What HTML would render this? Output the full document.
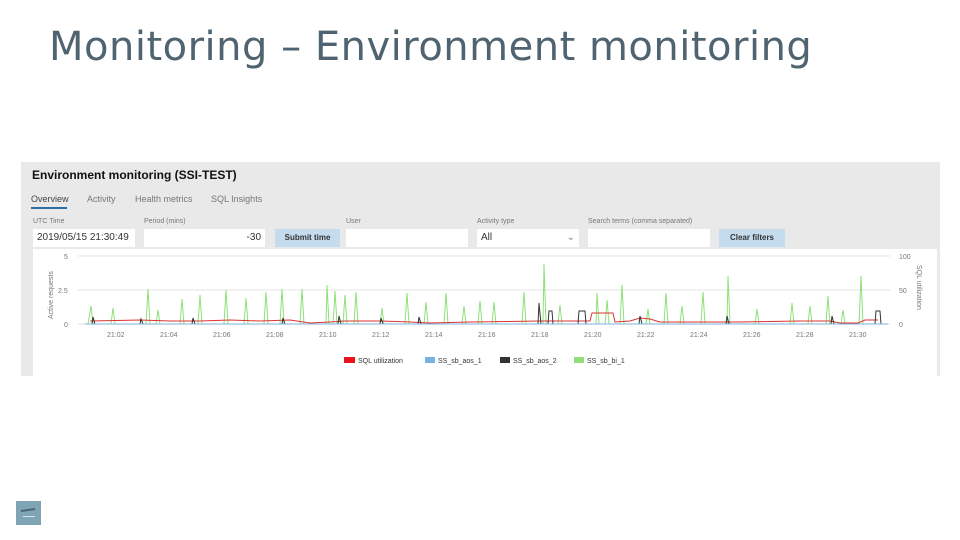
<!DOCTYPE html>
<html><head><meta charset="utf-8"><style>
body{margin:0;width:960px;height:540px;background:#fff;position:relative;overflow:hidden;font-family:"Liberation Sans",sans-serif}
.t{position:absolute;left:49px;top:24px;font-size:40px;color:#4f6470;font-family:"DejaVu Sans",sans-serif;letter-spacing:0.5px}
.p{position:absolute;left:21px;top:162px;width:919px;height:214px;background:#e9e9e9}
.a{position:absolute;font-size:8px;color:#777}
.in{position:absolute;background:#fff;height:18px;top:229px;font-size:10px;color:#333;line-height:18px;box-sizing:border-box;padding:0 4px}
.btn{position:absolute;top:229px;height:18px;background:#c5dcef;font-size:8px;font-weight:bold;color:#333;text-align:center;line-height:18px}
</style></head><body>
<div class="t">Monitoring – Environment monitoring</div>
<div class="p"></div>
<div style="position:absolute;left:32px;top:168px;font-size:12px;font-weight:bold;color:#111">Environment monitoring (SSI-TEST)</div>
<div class="a" style="left:31px;top:194px;font-size:9px;color:#444">Overview</div>
<div style="position:absolute;left:31px;top:207px;width:36px;height:2px;background:#2c6ea8"></div>
<div class="a" style="left:87px;top:194px;font-size:9px">Activity</div>
<div class="a" style="left:135px;top:194px;font-size:9px">Health metrics</div>
<div class="a" style="left:211px;top:194px;font-size:9px">SQL Insights</div>
<div class="a" style="left:33px;top:218px;font-size:7px">UTC Time</div>
<div class="a" style="left:144px;top:218px;font-size:7px">Period (mins)</div>
<div class="a" style="left:346px;top:218px;font-size:7px">User</div>
<div class="a" style="left:477px;top:218px;font-size:7px">Activity type</div>
<div class="a" style="left:588px;top:218px;font-size:7px">Search terms (comma separated)</div>
<div class="in" style="left:33px;width:102px">2019/05/15 21:30:49 ▦</div>
<div class="in" style="left:144px;width:121px;text-align:right">-30</div>
<div class="btn" style="left:275px;width:65px">Submit time</div>
<div class="in" style="left:346px;width:122px"></div>
<div class="in" style="left:477px;width:102px">All<span style="float:right;color:#888">⌄</span></div>
<div class="in" style="left:588px;width:122px"></div>
<div class="btn" style="left:719px;width:66px">Clear filters</div>
<svg style="position:absolute;left:33px;top:249px" width="904" height="127" viewBox="33 249 904 127">
<rect x="33" y="249" width="904" height="127" fill="#fff"/>
<g stroke="#e4e4e4" stroke-width="1"><line x1="78" y1="256" x2="890" y2="256"/><line x1="78" y1="290" x2="890" y2="290"/><line x1="78" y1="324" x2="890" y2="324"/></g>
<g font-size="7" fill="#777" font-family="Liberation Sans"><text x="64" y="259">5</text><text x="58" y="293">2.5</text><text x="64" y="327">0</text>
<text x="899" y="259">100</text><text x="899" y="293">50</text><text x="899" y="327">0</text>
<text transform="translate(53,319) rotate(-90)">Active requests</text>
<text transform="translate(917,265) rotate(90)">SQL utilization</text>
<text x="107" y="337">21:02</text><text x="160" y="337">21:04</text><text x="213" y="337">21:06</text><text x="266" y="337">21:08</text><text x="319" y="337">21:10</text><text x="372" y="337">21:12</text><text x="425" y="337">21:14</text><text x="478" y="337">21:16</text><text x="531" y="337">21:18</text><text x="584" y="337">21:20</text><text x="637" y="337">21:22</text><text x="690" y="337">21:24</text><text x="743" y="337">21:26</text><text x="796" y="337">21:28</text><text x="849" y="337">21:30</text></g>
<g stroke="#8fe07a" stroke-width="1" fill="none">
<path d="M88 324L91 306L93 324M111 324L113 308L115 324M146 324L148 289L150 324M156 324L158 310L160 324M180 324L182 299L184 324M198 324L200 295L202 324M224 324L226 290L228 324M244 324L246 298L248 324M264 324L266 292L268 324M280 324L282 289L284 324M300 324L302 289L304 324M326 324L327 285L329 324M333 324L335 291L337 324M343 324L345 295L347 324M354 324L356 292L358 324M380 324L382 308L384 324M405 324L407 293L409 324M424 324L426 302L428 324M444 324L446 293L448 324M462 324L464 306L466 324M478 324L480 301L482 324M492 324L494 302L496 324M522 324L524 292L526 324M543 324L544 264L546 324M558 324L560 305L562 324M596 324L597 293L599 324M605 324L607 300L609 324M620 324L622 285L624 324M646 324L648 309L650 324M664 324L666 293L668 324M680 324L682 306L684 324M701 324L703 292L705 324M727 324L728 276L730 324M755 324L757 309L759 324M790 324L792 303L794 324M808 324L810 306L812 324M826 324L828 296L830 324M841 324L843 310L845 324M859 324L861 276L863 324"/></g>
<path d="M90 321L140 320L170 321L200 321L230 320L260 321L290 320L310 323L330 322L345 321L380 321L410 322L430 323L470 322L540 321L590 321L592 313L613 313L615 322L630 321L640 318L650 319L660 322L700 322L740 322L800 321L830 321L840 323L858 323L865 320L878 320" stroke="#d33" stroke-width="1" fill="none"/>
<path d="M92 324L93 317L95 324M140 324L141 319L143 324M192 324L193 318L195 324M282 324L283 318L285 324M338 324L339 316L341 324M380 324L381 318L383 324M418 324L419 317L421 324M538 324L539 303L541 324M548 324L549 311L552 311L553 324M578 324L579 311L585 311L586 324M639 324L640 316L642 324M726 324L727 316L729 324M831 324L832 316L834 324M875 324L876 311L880 311L881 324" stroke="#333" stroke-width="1" fill="none"/>
<line x1="85" y1="324" x2="888" y2="324" stroke="#7ab3e0" stroke-width="1"/>
<g font-size="7" fill="#333" font-family="Liberation Sans"><rect x="344" y="357" width="11" height="6" fill="#e8141a"/><text x="358" y="363">SQL utilization</text>
<rect x="425" y="357" width="10" height="6" fill="#7ab3e0"/><text x="438" y="363">SS_sb_aos_1</text>
<rect x="500" y="357" width="10" height="6" fill="#333"/><text x="513" y="363">SS_sb_aos_2</text>
<rect x="574" y="357" width="10" height="6" fill="#8fe07a"/><text x="587" y="363">SS_sb_bi_1</text></g>
</svg>
<div style="position:absolute;left:16px;top:501px;width:25px;height:24px;background:#7fa4b4"><div style="position:absolute;left:5px;top:8px;width:14px;height:2px;background:#4a6470;transform:rotate(-8deg)"></div><div style="position:absolute;left:7px;top:15px;width:12px;height:1px;background:#d8e6ec"></div></div>
</body></html>
